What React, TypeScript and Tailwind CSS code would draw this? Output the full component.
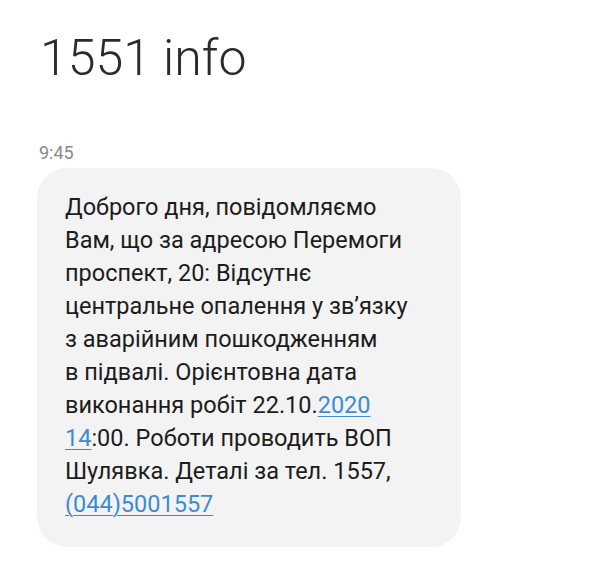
import React from "react";

const Link = ({ children }: { children: React.ReactNode }) => (
  <span className="text-[#3a8cd6] underline decoration-1 underline-offset-[3px]">{children}</span>
);

export default function App() {
  return (
    <div
      className="w-[606px] h-[562px] bg-white overflow-hidden"
      style={{ fontFamily: "Roboto, 'Noto Sans', sans-serif" }}
    >
      <h1 className="pt-[33px] pl-[40px] text-[50px] leading-[50px] font-light text-[#2b2b2b]">
        1551 info
      </h1>
      <div className="mt-[61px] pl-[39px] text-[18px] leading-[18px] text-[#8a8a8a]">9:45</div>
      <div className="mt-[6px] ml-[37px] w-[424px] rounded-[30px] bg-[#f3f3f3] pl-[28px] pr-[16px] pt-[23px] pb-[26px] text-[23.5px] leading-[33px] text-[#1c1c1c]">
        Доброго дня, повідомляємо
        <br />
        Вам, що за адресою Перемоги
        <br />
        проспект, 20: Відсутнє
        <br />
        центральне опалення у зв’язку
        <br />
        з аварійним пошкодженням
        <br />
        в підвалі. Орієнтовна дата
        <br />
        виконання робіт 22.10.<Link>2020</Link>
        <br />
        <Link>14</Link>:00. Роботи проводить ВОП
        <br />
        Шулявка. Деталі за тел. 1557,
        <br />
        <Link>(044)5001557</Link>
      </div>
    </div>
  );
}
